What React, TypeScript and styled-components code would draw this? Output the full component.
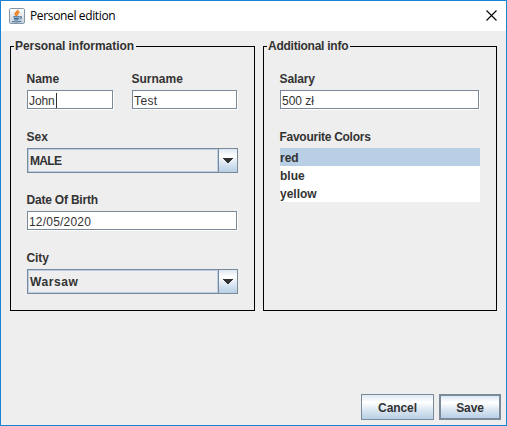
import React from "react";
import styled, { createGlobalStyle } from "styled-components";

const Global = createGlobalStyle`
  * { box-sizing: border-box; }
  html, body { margin: 0; padding: 0; background: #eeeeee; }
`;

const Window = styled.main`
  width: 507px;
  height: 426px;
  display: flex;
  flex-direction: column;
  overflow: hidden;
  border: 1px solid #1883d7;
  background: #eeeeee;
  color: #333333;
  font: bold 12px/14px "Liberation Sans", Arial, sans-serif;
`;

const TitleBar = styled.header`
  height: 30px;
  flex: none;
  display: flex;
  align-items: center;
  padding: 0 9px 0 8px;
  background: #ffffff;
  color: #000000;
`;

const Title = styled.h1`
  flex: 1;
  margin: 0 0 0 5px;
  font: normal 12px/16px "Open Sans", "Noto Sans", sans-serif;
  letter-spacing: -0.36px;
`;

const CloseButton = styled.button`
  display: flex;
  margin-bottom: 1px;
  padding: 0;
  border: 0;
  background: none;
`;

const Panels = styled.div`
  display: flex;
  gap: 8px;
  padding: 8px 0 0 9px;
`;

const Panel = styled.fieldset<{ $width: number }>`
  width: ${(p) => p.$width}px;
  height: 272px;
  min-width: 0;
  margin: 0;
  padding: 18px 16px 0 16px;
  border: 1px solid #000000;
`;

const Legend = styled.legend<{ $spacing: number }>`
  height: 15px;
  margin-left: -13px;
  padding: 0 2px 0 1px;
  line-height: 15px;
  letter-spacing: ${(p) => p.$spacing}px;
`;

const Row = styled.div`
  display: flex;
  gap: 18px;
`;

const Field = styled.div<{ $width: number; $below?: number }>`
  width: ${(p) => p.$width}px;
  margin-bottom: ${(p) => p.$below ?? 0}px;
`;

const Label = styled.label<{ $spacing?: number }>`
  display: block;
  height: 18px;
  margin-left: -0.5px;
  white-space: nowrap;
  letter-spacing: ${(p) => p.$spacing ?? 0}px;
`;

const TextBox = styled.div<{ $spacing?: number }>`
  display: flex;
  align-items: center;
  height: 19px;
  margin: 0 1px 0 0;
  padding: 2px 0 0 1px;
  border: 1px solid #7a8a99;
  box-shadow: 1px 1px 0 #ffffff;
  background: #ffffff;
  font-weight: normal;
  letter-spacing: ${(p) => p.$spacing ?? 0}px;
`;

const Caret = styled.span`
  width: 1px;
  height: 15px;
  margin: -1px 0 0 1px;
  background: #333333;
`;

const Combo = styled.div`
  display: flex;
  height: 25px;
  border: 1px solid #7a8a99;
`;

const ComboValue = styled.div<{ $spacing?: number }>`
  flex: 1;
  padding: 4px 0 0 1px;
  border: 1px solid #b8cfe5;
  letter-spacing: ${(p) => p.$spacing ?? 0}px;
`;

const metal = "linear-gradient(#dde8f3 0%, #ffffff 30%, #ffffff 32%, #dde8f3 60%, #b8cfe5 100%)";

const ComboArrow = styled.div`
  width: 19px;
  display: flex;
  align-items: center;
  justify-content: center;
  border-left: 1px solid #7a8a99;
  background: ${metal};
`;

const ColorList = styled.ul`
  margin: 0;
  padding: 0;
  list-style: none;
  background: #ffffff;
`;

const ColorItem = styled.li<{ $selected?: boolean }>`
  height: 18px;
  line-height: 20px;
  background: ${(p) => (p.$selected ? "#b8cfe5" : "transparent")};
`;

const Actions = styled.footer`
  display: flex;
  justify-content: flex-end;
  gap: 5px;
  margin-top: auto;
  padding: 0 5px 5px 0;
`;

const Button = styled.button<{ $width: number; $primary?: boolean }>`
  width: ${(p) => p.$width}px;
  height: 26px;
  padding: 1px 0 0;
  border: ${(p) => (p.$primary ? 2 : 1)}px solid #7a8a99;
  background: ${metal};
  color: #333333;
  font: inherit;
  letter-spacing: -0.1px;
`;

const JavaIcon = () => (
  <svg width="16" height="16" viewBox="0 0 16 16" fill="none">
    <defs>
      <linearGradient id="tile" x1="0" y1="0" x2="0" y2="1">
        <stop stopColor="#ffffff" />
        <stop offset="1" stopColor="#c5d1dc" />
      </linearGradient>
    </defs>
    <rect x=".5" y=".5" width="15" height="15" rx="1.2" fill="url(#tile)" stroke="#8796a5" />
    <path d="M8.7 1.8C9.6 3.8 5.4 4.4 6.3 6.2L7.8 8M10.6 4C8.4 4.8 7.8 5.7 8.8 7.3" stroke="#ee7f22" strokeWidth="1.7" />
    <path d="M4.2 8.9H10.2M4.8 10.6H9.8M5.3 12H9.4M3 13.5Q7.5 14.5 12.4 13.2M10.3 8.9C13.6 8 12.8 10.6 10.4 11.2" stroke="#416f96" strokeWidth="1.1" />
  </svg>
);

const CloseIcon = () => (
  <svg width="11" height="11" viewBox="0 0 11 11">
    <path d="M.5.5 10.5 10.5M10.5.5.5 10.5" stroke="#000000" strokeWidth="1.1" />
  </svg>
);

const Arrow = () => (
  <svg width="10" height="5" viewBox="0 0 10 5" shapeRendering="crispEdges">
    <path d="M0 0H10V1H9V2H8V3H7V4H6V5H4V4H3V3H2V2H1V1H0Z" fill="#333333" />
  </svg>
);

function Select({ value, spacing }: { value: string; spacing?: number }) {
  return (
    <Combo>
      <ComboValue $spacing={spacing}>{value}</ComboValue>
      <ComboArrow>
        <Arrow />
      </ComboArrow>
    </Combo>
  );
}

export default function App() {
  return (
    <Window>
      <Global />
      <TitleBar>
        <JavaIcon />
        <Title>Personel edition</Title>
        <CloseButton aria-label="Close">
          <CloseIcon />
        </CloseButton>
      </TitleBar>
      <Panels>
        <Panel $width={245}>
          <Legend $spacing={-0.05}>Personal information</Legend>
          <Row>
            <Field $width={87} $below={21}>
              <Label>Name</Label>
              <TextBox $spacing={-0.1}>
                John
                <Caret />
              </TextBox>
            </Field>
            <Field $width={106}>
              <Label>Surname</Label>
              <TextBox $spacing={0.4}>Test</TextBox>
            </Field>
          </Row>
          <Field $width={211} $below={20}>
            <Label>Sex</Label>
            <Select value="MALE" spacing={-0.7} />
          </Field>
          <Field $width={211} $below={21}>
            <Label $spacing={-0.2}>Date Of Birth</Label>
            <TextBox $spacing={0.2}>12/05/2020</TextBox>
          </Field>
          <Field $width={211}>
            <Label $spacing={-0.1}>City</Label>
            <Select value="Warsaw" spacing={0.6} />
          </Field>
        </Panel>
        <Panel $width={234}>
          <Legend $spacing={-0.25}>Additional info</Legend>
          <Field $width={200} $below={21}>
            <Label $spacing={-0.1}>Salary</Label>
            <TextBox>500 zł</TextBox>
          </Field>
          <Field $width={200}>
            <Label $spacing={-0.27}>Favourite Colors</Label>
            <ColorList>
              <ColorItem $selected>red</ColorItem>
              <ColorItem>blue</ColorItem>
              <ColorItem>yellow</ColorItem>
            </ColorList>
          </Field>
        </Panel>
      </Panels>
      <Actions>
        <Button $width={73}>Cancel</Button>
        <Button $width={62} $primary>
          Save
        </Button>
      </Actions>
    </Window>
  );
}
